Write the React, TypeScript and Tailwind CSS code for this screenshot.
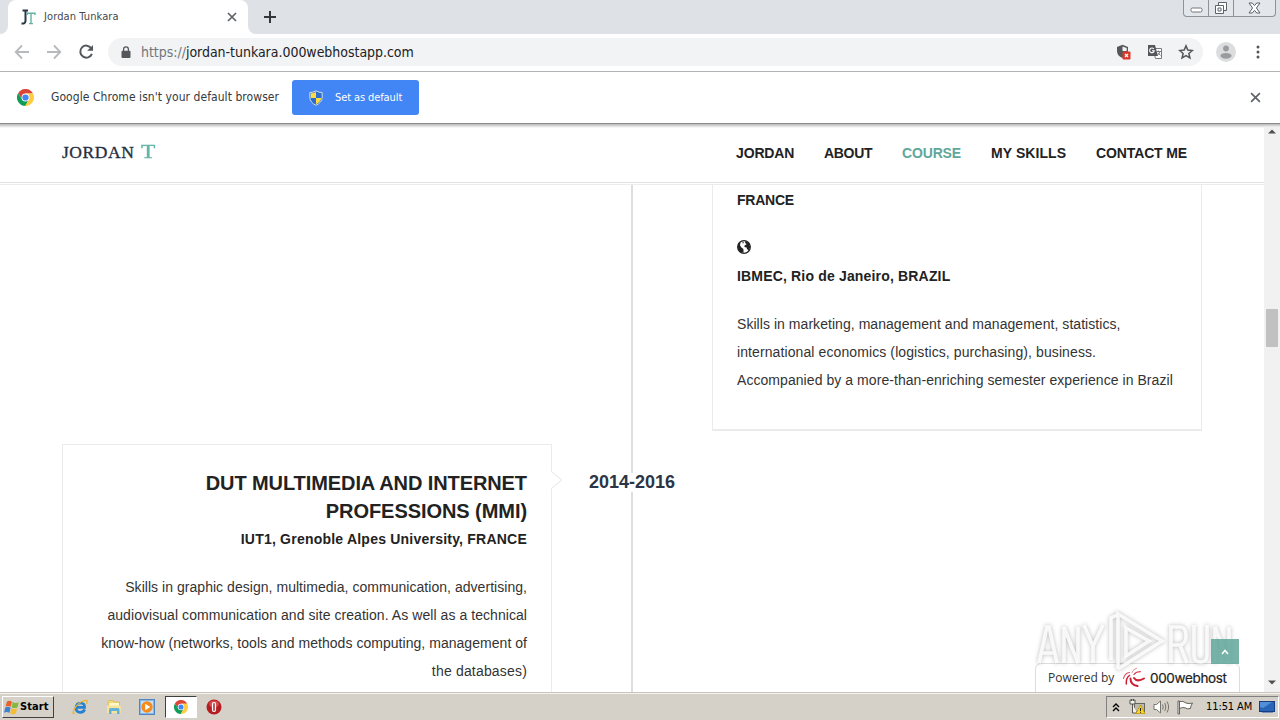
import type { ReactNode } from "react";

const ui = "font-['DejaVu_Sans_Condensed','DejaVu_Sans',sans-serif]";

function ChromeLogo({ size }: { size: number }) {
  return (
    <svg width={size} height={size} viewBox="0 0 48 48">
      <path d="M24 13 H45.3 L44.8 12 A24 24 0 0 0 3.2 12 L14.5 29.5 Z" fill="#db4437" />
      <path d="M3.2 12 L14.5 29.5 L33.5 29.5 L24 48 A24 24 0 0 1 3.2 12 Z" fill="#0f9d58" />
      <path d="M24 13 H45.3 A24 24 0 0 1 23 48 L33.5 29.5 Z" fill="#ffcd40" />
      <circle cx="24" cy="24" r="11" fill="#fff" />
      <circle cx="24" cy="24" r="8.8" fill="#4285f4" />
    </svg>
  );
}

function Cross({ size, color, width }: { size: number; color: string; width: number }) {
  return (
    <svg width={size} height={size} viewBox="0 0 10 10">
      <path d="M1 1 L9 9 M9 1 L1 9" stroke={color} strokeWidth={width} fill="none" />
    </svg>
  );
}

function TabStrip() {
  return (
    <div className="flex h-[34px] shrink-0 items-start bg-[#dee1e6]">
      <div className="flex h-[34px] w-[8px] items-end bg-white">
        <div className="h-[34px] w-[8px] rounded-br-[8px] bg-[#dee1e6]" />
      </div>
      <div className="flex h-[34px] w-[240px] items-center rounded-t-[8px] bg-white pl-[12px] pr-[11px]">
        <svg width="16" height="16" viewBox="0 0 16 16" className="shrink-0">
          <path d="M2.5 1.5 H8 M5.5 1.5 V12 Q5.3 15 1.5 14.4" fill="none" stroke="#2b3644" strokeWidth="2" />
          <path d="M7.2 6 V4.2 H15 V6 M11 4 V15 M9 14.6 H13" fill="none" stroke="#62b2a3" strokeWidth="1.4" />
        </svg>
        <span className={`${ui} ml-[8px] flex-1 text-[11px] leading-[16px] tracking-[0.1px] text-[#45484c]`}>Jordan Tunkara</span>
        <Cross size={10} color="#5f6368" width={1.7} />
      </div>
      <div className="h-[34px] w-[8px] bg-white">
        <div className="h-[34px] w-[8px] rounded-bl-[8px] bg-[#dee1e6]" />
      </div>
      <svg width="12" height="12" viewBox="0 0 12 12" className="ml-[8px] mt-[11px]">
        <path d="M6 0 V12 M0 6 H12" stroke="#33373d" strokeWidth="2" />
      </svg>
      <div className="ml-auto mr-[4px] flex h-[17px] w-[93px] rounded-b-[4px] border border-t-0 border-[#8d929b] bg-[#e3e6eb]">
        <div className="flex w-[25px] items-center justify-center border-r border-[#8d929b] pt-[4px]">
          <svg width="13" height="6" viewBox="0 0 13 6">
            <rect x="1" y="1" width="11" height="4" rx="1.5" fill="#fff" stroke="#70757d" />
          </svg>
        </div>
        <div className="flex w-[25px] items-center justify-center border-r border-[#8d929b]">
          <svg width="14" height="14" viewBox="0 0 14 14" fill="#fff" stroke="#5c616a">
            <path d="M4.5 1.5 h8 v8 h-8z" />
            <path d="M1.5 4.5 h8 v8 h-8z M4 7 h3 v3 h-3z" />
          </svg>
        </div>
        <div className="flex flex-1 items-center justify-center">
          <svg width="13" height="12" viewBox="0 0 13 12">
            <path d="M1 1 H4.3 L6.5 3.6 L8.7 1 H12 L8.4 6 L12 11 H8.7 L6.5 8.4 L4.3 11 H1 L4.6 6 Z" fill="#fff" stroke="#5c616a" />
          </svg>
        </div>
      </div>
    </div>
  );
}

function Toolbar() {
  return (
    <div className="flex h-[38px] shrink-0 items-center border-b border-[#b1b3b4] bg-white pb-[1px]">
      <svg width="108" height="36" viewBox="0 0 108 36" fill="none" className="shrink-0">
        <path d="M29 18 H16 M22 11.5 L15.7 18 L22 24.5" stroke="#b7b9bc" strokeWidth="1.8" />
        <path d="M47 18 H60 M54 11.5 L60.3 18 L54 24.5" stroke="#b7b9bc" strokeWidth="1.8" />
        <path d="M91.3 14.3 A6 6 0 1 0 91.9 19.8" stroke="#54585d" strokeWidth="2" />
        <path d="M93 11 V16.8 H87.2 Z" fill="#54585d" />
      </svg>
      <div className="flex h-[28px] w-[1095px] items-center rounded-full bg-[#f1f3f4] pl-[13px] pr-[9px]">
        <svg width="10" height="13" viewBox="0 0 10 13" className="shrink-0">
          <rect x="0.5" y="4.8" width="9" height="7.2" rx="1" fill="#54585d" />
          <path d="M2.6 5 V3.2 A2.4 2.4 0 0 1 7.4 3.2 V5" fill="none" stroke="#54585d" strokeWidth="1.3" />
        </svg>
        <span className={`${ui} ml-[10px] text-[14px] leading-[20px] tracking-[-0.03px] text-[#202124]`}>
          <span className="text-[#72767b]">https://</span>jordan-tunkara.000webhostapp.com
        </span>
        <div className="ml-auto flex items-center gap-[15px]">
          <svg width="15" height="16" viewBox="0 0 15 16" className="mr-px">
            <path d="M1 3 L6.5 0.8 L12 3 V7 Q12 12 6.5 14 Q1 12 1 7 Z" fill="#54585d" />
            <path d="M6.5 2.4 L10.7 4 V7 H6.5Z" fill="#f1f3f4" />
            <rect x="6.5" y="7.5" width="8" height="8" rx="1" fill="#d93a2b" />
            <path d="M9 10 L12 13 M12 10 L9 13" stroke="#fff" strokeWidth="1.2" />
          </svg>
          <svg width="16" height="16" viewBox="0 0 16 16">
            <path d="M6 4.5 H14.5 V14.5 H8.5 Z" fill="#fff" stroke="#777b80" />
            <path d="M1 1 H8 L11 12 H1 Z" fill="#54585d" />
            <path d="M6.8 5 A2.3 2.3 0 1 0 7.2 6.8 H5" fill="none" stroke="#fff" strokeWidth="1.1" />
            <path d="M9.5 7.5 H14 M11.5 6.5 V7.5 M13 7.5 Q12.5 10 10.5 11 M11 8.7 L13.5 11.5" fill="none" stroke="#777b80" />
          </svg>
          <svg width="16" height="16" viewBox="0 0 24 24" fill="none" stroke="#54585d" strokeWidth="2.3">
            <path d="M12 2.8 L14.7 9.2 L21.5 9.8 L16.3 14.3 L17.9 21 L12 17.4 L6.1 21 L7.7 14.3 L2.5 9.8 L9.3 9.2 Z" />
          </svg>
        </div>
      </div>
      <svg width="20" height="20" viewBox="0 0 20 20" className="ml-[13px]">
        <circle cx="10" cy="10" r="10" fill="#dcdddf" />
        <circle cx="10" cy="6.5" r="2.9" fill="#999b9e" />
        <ellipse cx="10" cy="13.8" rx="5.6" ry="2.9" fill="#999b9e" />
      </svg>
      <svg width="4" height="16" viewBox="0 0 4 16" className="ml-[20px]" fill="#54585d">
        <circle cx="2" cy="3" r="1.5" />
        <circle cx="2" cy="8" r="1.5" />
        <circle cx="2" cy="13" r="1.5" />
      </svg>
    </div>
  );
}

function InfoBar() {
  return (
    <div className="flex h-[52px] shrink-0 items-center border-b border-[#8a8a8a] bg-white pl-[17px] pr-[19px]">
      <ChromeLogo size={17} />
      <span className={`${ui} ml-[17px] w-[241px] whitespace-nowrap pb-[2px] text-[12px] leading-[20px] tracking-[0.06px] text-[#36393d]`}>Google Chrome isn't your default browser</span>
      <div className="flex h-[35px] w-[127px] items-center rounded-[3px] bg-[#4285f4] pl-[17px]">
        <svg width="14" height="16" viewBox="0 0 14 16">
          <path d="M7 0.8 Q10 2.6 13.2 2.6 V7 Q13.2 12.5 7 15.3 Q0.8 12.5 0.8 7 V2.6 Q4 2.6 7 0.8Z" fill="#2b6ed0" stroke="#d5dbe3" />
          <path d="M7 2 V8 H1.7 V3.6 Q4.5 3.4 7 2Z M7 8 H12.2 Q11.8 12 7 14.2Z" fill="#fddb42" />
        </svg>
        <span className={`${ui} ml-[12px] whitespace-nowrap text-[11px] leading-[16px] tracking-[-0.1px] text-white`}>Set as default</span>
      </div>
      <div className="ml-auto flex">
        <Cross size={11} color="#5f6368" width={1.5} />
      </div>
    </div>
  );
}

function SiteHeader() {
  return (
    <header className="flex h-[61px] shrink-0 flex-col border-b border-[#ececec]">
      <div className="h-[4px] bg-linear-to-b from-[#b8b8b8] to-white" />
      <div className="flex h-[55px] items-center border-b border-[#e2e2e2] pb-[7px] pl-[62px]">
        <div className="flex w-[674px] items-baseline whitespace-nowrap font-['Liberation_Serif',serif] text-[17.5px] leading-[24px] text-[#27303f]">
          <span className="w-[79px] tracking-[0.55px] [-webkit-text-stroke:0.35px_#27303f]">JORDAN</span>
          <span className="origin-bottom-left scale-x-[1.3] text-[18px] text-[#63b5a5] [-webkit-text-stroke:0.35px_#63b5a5]">T</span>
        </div>
        <nav className="flex gap-[30px] whitespace-nowrap pt-[2px] text-[14px] font-bold leading-[20px] text-[#222]">
          <span className="w-[58px] tracking-[-0.15px]">JORDAN</span>
          <span className="w-[48px] tracking-[-0.3px]">ABOUT</span>
          <span className="w-[59px] tracking-[-0.15px] text-[#5fa79b]">COURSE</span>
          <span className="w-[75px] tracking-[0.08px]">MY SKILLS</span>
          <span className="tracking-[-0.12px]">CONTACT ME</span>
        </nav>
      </div>
    </header>
  );
}

function Timeline() {
  return (
    <div className="flex h-[507px] pl-[62px]">
      <div className="flex w-[490px] flex-col pt-[259px]">
        <section className="relative h-[300px] shrink-0 border border-[#ebebeb] pr-[24px] pt-[24px] text-right">
          <svg width="12" height="18" viewBox="0 0 12 18" className="absolute left-[488px] top-[26px]">
            <path d="M0.5 0.5 V17.5" stroke="#fff" strokeWidth="1.6" />
            <path d="M0.5 0.5 L10.5 9 L0.5 17.5" fill="#fff" stroke="#e4e4e4" />
          </svg>
          <h2 className="whitespace-nowrap text-[20px] font-bold leading-[28px] text-[#222]">
            <span className="block tracking-[-0.09px]">DUT MULTIMEDIA AND INTERNET</span>
            <span className="block tracking-[-0.06px]">PROFESSIONS (MMI)</span>
          </h2>
          <h3 className="text-[14px] font-bold leading-[28px] tracking-[0.22px] text-[#222]">IUT1, Grenoble Alpes University, FRANCE</h3>
          <p className="mt-[20px] whitespace-nowrap text-[14px] leading-[28px] text-[#333]">
            <span className="block tracking-[0.04px]">Skills in graphic design, multimedia, communication, advertising,</span>
            <span className="block tracking-[0.06px]">audiovisual communication and site creation. As well as a technical</span>
            <span className="block tracking-[0.04px]">know-how (networks, tools and methods computing, management of</span>
            <span className="block tracking-[0.18px]">the databases)</span>
          </p>
        </section>
      </div>
      <div className="flex w-[160px] flex-col items-center">
        <div className="h-[288px] w-[2px] bg-[#dedede]" />
        <div className="h-[19px] whitespace-nowrap text-[18px] font-bold leading-[19px] text-[#2b3545]">2014-2016</div>
        <div className="h-[200px] w-[2px] bg-[#dedede]" />
      </div>
      <section className="h-[246px] w-[490px] border border-b-2 border-t-0 border-[#ebebeb] pl-[24px] pt-[1px] text-[14px] leading-[28px] text-[#222]">
        <h3 className="font-bold tracking-[-0.25px]">FRANCE</h3>
        <svg width="14" height="14" viewBox="0 0 14 14" className="mt-[26px]">
          <circle cx="7" cy="7" r="6.3" fill="#fff" stroke="#222" strokeWidth="1.3" />
          <path d="M1 3.5 L3.5 2.8 L3 5.2 L4.4 7.6 L6.4 9 L6.6 12.8 L3 12 L0.8 8 Z M8 1 L12 3 L13.2 7 L11.6 10.4 L10 9 L9.6 7.4 L7.4 7 L7.6 5.4 L9.6 4.2 L8.2 3 Z M5.4 1.6 L7 2.4 L5.8 3.8 Z" fill="#222" />
        </svg>
        <h3 className="mt-[8px] font-bold tracking-[0.17px]">IBMEC, Rio de Janeiro, BRAZIL</h3>
        <p className="mt-[20px] whitespace-nowrap text-[#333]">
          <span className="block tracking-[0.05px]">Skills in marketing, management and management, statistics,</span>
          <span className="block tracking-[0.1px]">international economics (logistics, purchasing), business.</span>
          <span className="block tracking-[0.06px]">Accompanied by a more-than-enriching semester experience in Brazil</span>
        </p>
      </section>
    </div>
  );
}

function Overlays() {
  return (
    <>
      <div className="absolute left-[1035px] top-[539px] flex h-[32px] w-[205px] items-center whitespace-nowrap rounded-t-[6px] border border-[#dcdcdc] bg-white pb-[3px] pl-[12px]">
        <span className="w-[74px] font-['Open_Sans',sans-serif] text-[12px] leading-[20px] tracking-[0.05px] text-[#333]">Powered by</span>
        <svg width="24" height="21" viewBox="0 0 24 21" fill="none" stroke="#cf1f35" strokeLinecap="round">
          <path d="M10 5.5 Q11 2 14.5 1.2" strokeWidth="1" stroke="#e58b96" />
          <path d="M12 7.5 Q14 4.5 18.5 4.8" strokeWidth="1.1" />
          <path d="M7.5 5.5 Q3 6 1.5 11.5" strokeWidth="1.1" stroke="#dc5566" />
          <path d="M7.5 8.5 Q3.8 11 4.3 17" strokeWidth="1.5" />
          <path d="M8.5 11.5 Q8.5 18 15.5 19" strokeWidth="2" />
          <path d="M12 11 Q15 15.5 22 11.5" strokeWidth="2" />
        </svg>
        <span className="ml-[4px] font-['Inter',sans-serif] text-[13.5px] leading-[20px] tracking-[-0.35px] text-[#222] [-webkit-text-stroke:0.2px_#222]">000webhost</span>
      </div>
      <svg width="204" height="70" viewBox="0 0 204 70" className="absolute left-[1034px] top-[480px] drop-shadow-[0_0_2px_rgba(0,0,0,0.32)]" fill="none" stroke="rgba(255,255,255,0.85)" strokeWidth="3.6">
        <path d="M5 59 L13 23 H15 L23 59 M8 49 H20" />
        <path d="M30 59 V23 L44 59 V23" />
        <path d="M50 21 L59 42 V59 M69 21 L59 42" />
        <path d="M77 56 V14 L83 11" />
        <path d="M84 65 V10 L128 37 L84 65 M92 52 V24 L115 37 Z" />
        <path d="M137 59 V23 H146 Q152 23 152 32 Q152 40 146 41 H137 M146 41 L153 59" />
        <path d="M160 21 V51 Q160 58 166.5 58 Q173 58 173 51 V21" />
        <path d="M181 59 V23 L195 59 V23" />
      </svg>
      <div className="absolute left-[1211px] top-[515px] flex h-[25px] w-[28px] items-center justify-center bg-[#5fa699]/85">
        <svg width="8" height="6" viewBox="0 0 8 6">
          <path d="M1 5 L4 1.5 L7 5" fill="none" stroke="#fff" strokeWidth="1.5" />
        </svg>
      </div>
    </>
  );
}

function ScrollBar() {
  return (
    <div className="flex w-[16px] shrink-0 flex-col items-center bg-[#f1f1f1]">
      <div className="h-[3px] w-full bg-linear-to-b from-[#b8b8b8] to-[#f1f1f1]" />
      <svg width="8" height="5" viewBox="0 0 8 5" className="mt-[2px]"><path d="M0 4.5 L4 0.5 L8 4.5Z" fill="#505050" /></svg>
      <div className="mt-[175px] h-[38px] w-[12px] bg-[#c1c1c1]" />
      <svg width="8" height="5" viewBox="0 0 8 5" className="mb-[7px] mt-auto"><path d="M0 0.5 L4 4.5 L8 0.5Z" fill="#505050" /></svg>
    </div>
  );
}

function QuickIcon({ children }: { children: ReactNode }) {
  return <div className="flex h-[22px] w-[33px] items-center justify-center">{children}</div>;
}

function TaskBar() {
  return (
    <div className="flex h-[28px] shrink-0 items-center border-t border-[#c9c5be] bg-[#d5d0c8] pt-px shadow-[inset_0_1px_0_#f4f2ee]">
      <div className="ml-[2px] flex h-[22px] w-[52px] items-center border border-b-[#404040] border-l-white border-r-[#404040] border-t-white pl-[1px]">
        <svg width="16" height="15" viewBox="0 0 16 15">
          <path d="M3 1.5 Q5.5 0 8 1.7 L6.8 6.8 Q4 5.2 1.5 6.6Z" fill="#e8622c" />
          <path d="M8.8 2.1 Q11.5 3.7 14.8 2.3 L13.4 7.4 Q10.4 8.8 7.6 7.2Z" fill="#85b83f" />
          <path d="M1.3 7.5 Q4 6.1 6.6 7.7 L5.3 12.9 Q2.8 11.4 0 12.7Z" fill="#3f80cf" />
          <path d="M7.4 8.2 Q10.2 9.7 13.1 8.4 L11.7 13.6 Q8.9 15 6.1 13.3Z" fill="#f5bd30" />
        </svg>
        <span className={`${ui} text-[11px] font-bold leading-[16px] tracking-[0.1px] text-black`}>Start</span>
      </div>
      <div className="ml-[10px] flex items-center">
        <QuickIcon>
          <svg width="17" height="16" viewBox="0 0 17 16" fill="none">
            <path d="M12.8 10.5 Q11 13.7 7.8 13.3 Q4 12.8 4 8.7 Q4.3 4.2 8.5 4 Q12.7 4.2 12.6 8.3 H5" stroke="#2681d2" strokeWidth="2.7" />
            <path d="M2.8 13.7 Q-0.5 16.2 2.3 10 Q6 3.6 12.5 1.5 Q16.8 0.4 14.4 5" stroke="#eab52f" strokeWidth="1.3" />
          </svg>
        </QuickIcon>
        <QuickIcon>
          <svg width="16" height="16" viewBox="0 0 16 16">
            <path d="M2 3 L3 1.5 H7 L8 3 H13.5 V13 H2Z" fill="#f4da75" stroke="#d7b54c" strokeWidth=".7" />
            <path d="M3.5 4 H13 V9 H3.5Z" fill="#fff8cf" />
            <path d="M1 6.5 H14.7 V14 H1Z" fill="#f7e49a" />
            <path d="M3 15 V10.5 Q3 9 4.5 9 H12 Q13.5 9 13.5 10.5 V15 H11 V12 H5.5 V15Z" fill="#62b1d9" />
          </svg>
        </QuickIcon>
        <QuickIcon>
          <svg width="16" height="16" viewBox="0 0 16 16">
            <rect x="0.5" y="0.5" width="15" height="15" fill="#86b9e8" stroke="#4f86bd" />
            <rect x="2" y="2" width="12" height="12" fill="#c5dff5" />
            <circle cx="8" cy="8" r="5.7" fill="#f58b1d" />
            <path d="M6.2 4.8 L11.3 8 L6.2 11.2Z" fill="#fff" />
          </svg>
        </QuickIcon>
        <div className="ml-[2px] flex h-[22px] w-[32px] items-center justify-center border border-b-white border-l-[#404040] border-r-white border-t-[#404040] bg-white">
          <ChromeLogo size={14} />
        </div>
        <div className="flex">
          <QuickIcon>
            <svg width="16" height="16" viewBox="0 0 16 16">
              <circle cx="8" cy="8" r="7.5" fill="#b51d22" />
              <ellipse cx="8" cy="5" rx="5" ry="3.5" fill="#d4494c" />
              <rect x="5.9" y="3" width="4.2" height="10" rx="2" fill="#fff" />
              <rect x="7.3" y="4" width="1.4" height="8" rx=".7" fill="#a0181d" />
            </svg>
          </QuickIcon>
        </div>
      </div>
      <div className="ml-auto mr-[1px] flex h-[22px] w-[173px] items-center border border-b-white border-l-[#808080] border-r-white border-t-[#808080]">
        <svg width="8" height="9" viewBox="0 0 8 9" className="ml-[5px]" fill="none" stroke="#000" strokeWidth="1.3">
          <path d="M1 4 L4 1 L7 4 M1 8 L4 5 L7 8" />
        </svg>
        <svg width="17" height="16" viewBox="0 0 17 16" className="ml-[9px]">
          <rect x="5.5" y="4.5" width="10" height="8" fill="#bbb9ad" stroke="#65645f" />
          <path d="M1 1 H6 V5 H1Z M2.5 0 V2 M4.5 0 V2 M3.5 5 V14 H8" fill="#f4f3ed" stroke="#55544f" />
          <path d="M11.5 6 L16 14.5 H7Z" fill="#ffd91e" stroke="#b58c00" strokeWidth=".7" />
          <path d="M11.5 9 V12 M11.5 12.7 V13.7" stroke="#222" strokeWidth="1.1" />
        </svg>
        <svg width="17" height="14" viewBox="0 0 17 14" className="ml-[7px]" fill="none" stroke="#77746e">
          <path d="M1 4.5 H3.5 L7.5 1 V13 L3.5 9.5 H1Z" fill="#fff" />
          <path d="M9.5 4.5 Q11 7 9.5 9.5 M11.8 3 Q14 7 11.8 11 M14 1.5 Q17.2 7 14 12.5" />
        </svg>
        <svg width="17" height="15" viewBox="0 0 17 15" className="ml-[7px]" fill="#fff" stroke="#65625c">
          <path d="M2.5 1.5 Q6 0.5 9 3 Q12 4.2 15.5 3 Q13.5 6 13.5 8.5 Q10 9.5 8 7.8 Q5.5 7 2.5 8.5Z" />
          <path d="M1 1 H2.5 V14 H1Z" />
        </svg>
        <span className={`${ui} ml-[12px] w-[53px] whitespace-nowrap text-[11px] leading-[16px] tracking-[-0.1px] text-black`}>11:51 AM</span>
        <svg width="16" height="13" viewBox="0 0 16 13">
          <rect x="0.5" y="0.5" width="15" height="10" fill="#2865b8" stroke="#173d80" />
          <path d="M1 1 H13 L4 7 L1 6Z" fill="#528fd8" />
          <path d="M3 11.5 H14" stroke="#7890b8" />
        </svg>
      </div>
    </div>
  );
}

export default function App() {
  return (
    <div className="flex h-[720px] w-[1280px] flex-col overflow-hidden bg-white font-['Liberation_Sans',Arial,sans-serif]">
      <TabStrip />
      <Toolbar />
      <InfoBar />
      <main className="flex h-[568px] shrink-0">
        <div className="relative flex w-[1264px] flex-col overflow-hidden">
          <SiteHeader />
          <Timeline />
          <Overlays />
        </div>
        <ScrollBar />
      </main>
      <TaskBar />
    </div>
  );
}
